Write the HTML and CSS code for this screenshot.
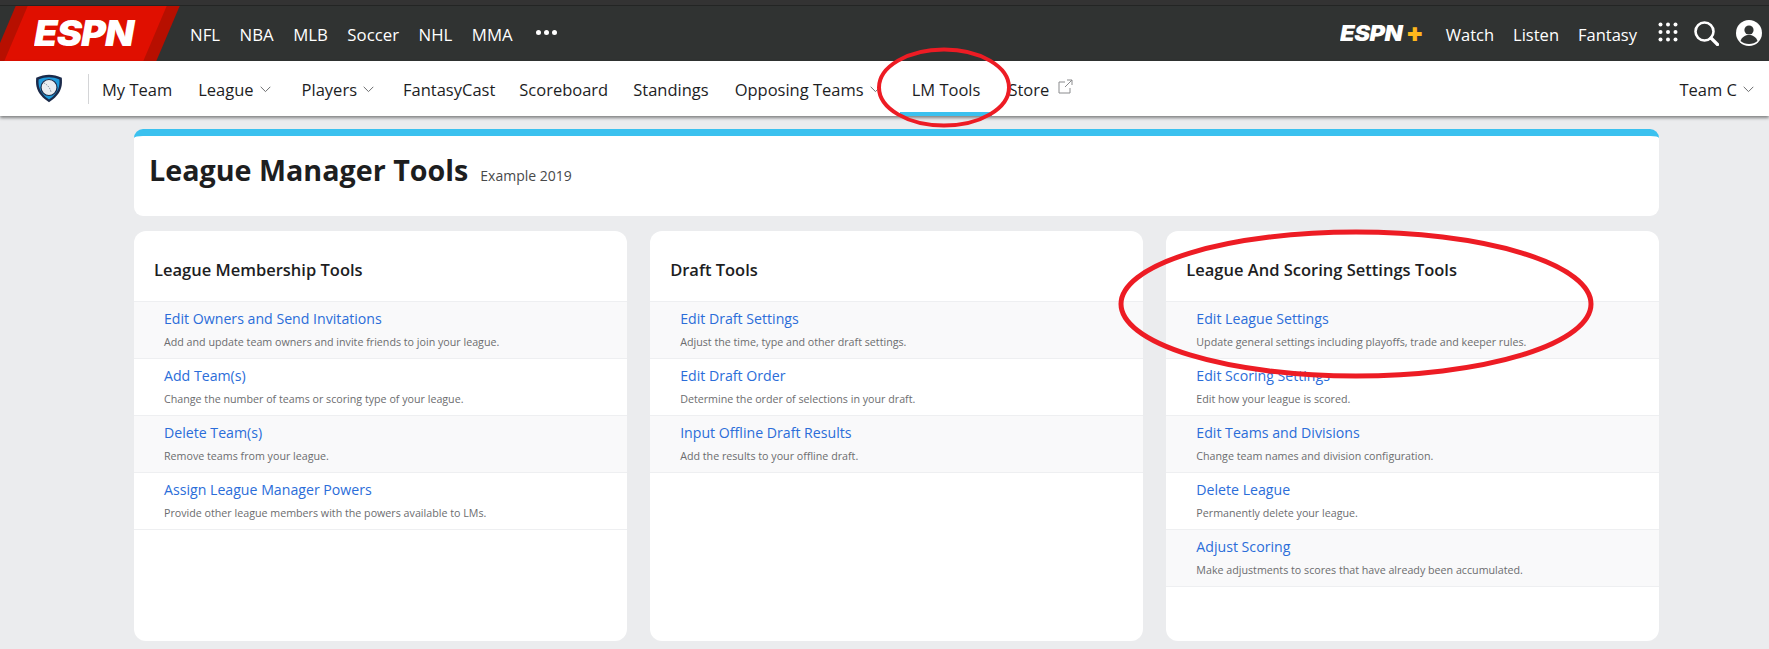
FILE: index.html
```html
<!DOCTYPE html>
<html lang="en">
<head>
<meta charset="utf-8">
<title>League Manager Tools</title>
<link rel="stylesheet" href="styles.css">
</head>
<body>
<header class="topbar">
  <a class="espn-logo"><span class="espn-word">ESPN</span></a>
  <nav class="sports">
    <a>NFL</a><a>NBA</a><a>MLB</a><a>Soccer</a><a>NHL</a><a>MMA</a>
    <span class="dots"><i></i><i></i><i></i></span>
  </nav>
  <div class="top-right">
    <a class="plus"><span class="plus-word">ESPN</span><span class="plus-sign">+</span></a>
    <a class="tr-link">Watch</a><a class="tr-link">Listen</a><a class="tr-link">Fantasy</a>
    <svg class="grid-ic" width="20" height="20" viewBox="0 0 20 20"><g fill="#fff"><circle cx="2.500" cy="2.500" r="2"/><circle cx="10" cy="2.500" r="2"/><circle cx="17.500" cy="2.500" r="2"/><circle cx="2.500" cy="10" r="2"/><circle cx="10" cy="10" r="2"/><circle cx="17.500" cy="10" r="2"/><circle cx="2.500" cy="17.500" r="2"/><circle cx="10" cy="17.500" r="2"/><circle cx="17.500" cy="17.500" r="2"/></g></svg>
    <svg class="search-ic" width="26" height="26" viewBox="0 0 26 26"><circle cx="11.500" cy="11.500" r="9" fill="none" stroke="#fff" stroke-width="2.600"/><path d="M18 18l6.500 6.500" stroke="#fff" stroke-width="3.200" stroke-linecap="round"/></svg>
    <svg class="user-ic" width="26" height="26" viewBox="0 0 26 26"><circle cx="13" cy="13" r="13" fill="#fff"/><circle cx="13" cy="10" r="4.600" fill="#303332"/><path d="M4.500 21c1.500-4.200 5-6 8.500-6s7 1.800 8.500 6c-2.200 2-5.200 3-8.500 3s-6.300-1-8.500-3z" fill="#303332"/></svg>
  </div>
</header>
<nav class="subnav">
  <svg class="shield" width="28" height="29" viewBox="0 0 28 29"><path d="M14 .8c4 0 8.500 1 12.800 3 .6 7.500.3 16-12.800 24.400C.9 19.800.6 11.300 1.200 3.800 5.500 1.800 10 .8 14 .8z" fill="#1b2a4a"/><path d="M14 3.300c3.400 0 7 .8 10.400 2.300.4 6.300-.2 13-10.400 20C3.800 18.600 3.200 11.900 3.600 5.600 7 4.100 10.600 3.300 14 3.300z" fill="#1e9bdc"/><circle cx="14" cy="13.500" r="8" fill="#e8edf1" stroke="#1b2a4a" stroke-width="1.200"/><path d="M9 9c3 1.500 6 4.500 7 9" fill="none" stroke="#8b97a5" stroke-width="1" stroke-dasharray="1.500 1"/></svg>
  <span class="divider"></span>
  <a class="sn my">My Team</a>
  <a class="sn league">League<svg class="chev" width="11" height="7" viewBox="0 0 11 7"><path d="M.7.8l4.800 4.800L10.300.8" fill="none" stroke="#6c6d6f" stroke-width="1"/></svg></a>
  <a class="sn players">Players<svg class="chev" width="11" height="7" viewBox="0 0 11 7"><path d="M.7.8l4.800 4.800L10.300.8" fill="none" stroke="#6c6d6f" stroke-width="1"/></svg></a>
  <a class="sn cast">FantasyCast</a>
  <a class="sn score">Scoreboard</a>
  <a class="sn stand">Standings</a>
  <a class="sn opp">Opposing Teams<svg class="chev" width="11" height="7" viewBox="0 0 11 7"><path d="M.7.8l4.800 4.800L10.300.8" fill="none" stroke="#6c6d6f" stroke-width="1"/></svg></a>
  <a class="sn lm active">LM Tools</a>
  <a class="sn store">Store<svg class="ext" width="15" height="15" viewBox="0 0 15 15"><path d="M12 9v5H1V3h6M9 1h5v5M14 1L7 8" fill="none" stroke="#8a8b8d" stroke-width="1"/></svg></a>
  <a class="sn team">Team C<svg class="chev" width="11" height="7" viewBox="0 0 11 7"><path d="M.7.8l4.800 4.800L10.300.8" fill="none" stroke="#6c6d6f" stroke-width="1"/></svg></a>
</nav>
<main class="content">
  <section class="page-head">
    <h1>League Manager Tools</h1>
    <span class="league-name">Example 2019</span>
  </section>
  <div class="tools">
    <section class="card">
      <h2>League Membership Tools</h2>
      <ul>
        <li><a>Edit Owners and Send Invitations</a><p>Add and update team owners and invite friends to join your league.</p></li>
        <li><a>Add Team(s)</a><p>Change the number of teams or scoring type of your league.</p></li>
        <li><a>Delete Team(s)</a><p>Remove teams from your league.</p></li>
        <li><a>Assign League Manager Powers</a><p>Provide other league members with the powers available to LMs.</p></li>
      </ul>
    </section>
    <section class="card">
      <h2>Draft Tools</h2>
      <ul>
        <li><a>Edit Draft Settings</a><p>Adjust the time, type and other draft settings.</p></li>
        <li><a>Edit Draft Order</a><p>Determine the order of selections in your draft.</p></li>
        <li><a>Input Offline Draft Results</a><p>Add the results to your offline draft.</p></li>
      </ul>
    </section>
    <section class="card">
      <h2>League And Scoring Settings Tools</h2>
      <ul>
        <li><a>Edit League Settings</a><p>Update general settings including playoffs, trade and keeper rules.</p></li>
        <li><a>Edit Scoring Settings</a><p>Edit how your league is scored.</p></li>
        <li><a>Edit Teams and Divisions</a><p>Change team names and division configuration.</p></li>
        <li><a>Delete League</a><p>Permanently delete your league.</p></li>
        <li><a>Adjust Scoring</a><p>Make adjustments to scores that have already been accumulated.</p></li>
      </ul>
    </section>
  </div>
</main>
<svg class="annot" width="1769" height="649" viewBox="0 0 1769 649">
  <ellipse cx="944" cy="87.500" rx="65" ry="38" fill="none" stroke="#ed1c24" stroke-width="4"/>
  <ellipse cx="1356" cy="304" rx="235" ry="72" fill="none" stroke="#ed1c24" stroke-width="5"/>
</svg>
</body>
</html>
```
FILE: styles.css
```css
* { box-sizing: border-box; }
html, body { margin: 0; padding: 0; }
body {
  position: relative;
  width: 1769px;
  height: 649px;
  overflow: hidden;
  background: #ebecee;
  font-family: "Open Sans", "Noto Sans", sans-serif;
  color: #1d1e1f;
}
a { text-decoration: none; color: inherit; }

.topbar {
  height: 61px;
  background: #303332;
  border-top: 5px solid #333;
  box-shadow: inset 0 1px 0 #232524;
  display: flex;
  align-items: center;
  color: #fff;
  font-size: 16.500px;
}
.espn-logo {
  position: relative;
  flex: none;
  width: 190px;
  height: 56px;
  align-self: flex-end;
  overflow: hidden;
  display: flex;
  align-items: center;
}
.espn-logo::before {
  content: "";
  position: absolute;
  left: 4px; top: 1px; bottom: 0;
  width: 164px;
  background: #b70f00;
  transform: skewX(-23deg);
}
.espn-logo::after {
  content: "";
  position: absolute;
  left: 16px; top: 1px; bottom: 0;
  width: 139px;
  background: #e00f00;
  transform: skewX(-23deg);
}
.espn-word {
  position: relative;
  z-index: 1;
  margin-left: 34px;
  font-family: Inter, "Liberation Sans", sans-serif;
  font-weight: 900;
  font-style: italic;
  font-size: 35px;
  line-height: 1;
  letter-spacing: -1px;
  transform: scaleX(1.090);
  transform-origin: left center;
}
.sports { display: flex; align-items: center; gap: 19.500px; font-size: 16.800px; padding-top: 2px; }
.dots { display: flex; gap: 3px; margin-left: 4px; margin-top: -4px; }
.dots i { width: 5px; height: 5px; border-radius: 50%; background: #fff; }
.top-right { margin-left: auto; display: flex; align-items: center; }
.plus {
  display: flex;
  align-items: center;
  margin-right: 22px;
  font-family: Inter, "Liberation Sans", sans-serif;
  font-style: italic;
  font-weight: 900;
  font-size: 22px;
  line-height: 1;
  width: 84px;
}
.plus-word { display: inline-block; transform: scaleX(1.080); transform-origin: left center; letter-spacing: -.5px; }
.plus-sign { margin-left: auto; color: #ffb81c; font-size: 26px; font-style: normal; }
.tr-link { margin-right: 19px; padding-top: 3px; }
.tr-link:last-of-type { margin-right: 21px; }
.grid-ic { margin-right: 15px; margin-top: -2px; }
.search-ic { margin-right: 17px; }
.user-ic { margin-right: 7px; }

.subnav {
  height: 55px;
  background: #fff;
  box-shadow: 0 2px 3px rgba(0,0,0,.45);
  display: flex;
  align-items: center;
  font-size: 16.500px;
  position: relative;
}
.shield { margin-left: 35px; flex: none; }
.divider { width: 1px; height: 30px; background: #d4d5d7; margin-left: 25px; }
.sn { position: relative; display: flex; align-items: center; height: 55px; padding-top: 1px; white-space: nowrap; }
.my { margin-left: 13px; }
.league { margin-left: 26px; }
.players { margin-left: 31px; }
.cast { margin-left: 29px; }
.score { margin-left: 24px; }
.stand { margin-left: 25px; }
.opp { margin-left: 26px; }
.lm { margin-left: 31px; }
.store { margin-left: 28px; }
.team { margin-left: auto; margin-right: 15px; }
.chev { margin-left: 6px; margin-top: 0; }
.ext { margin-left: 9px; margin-top: -5px; }
.active::after {
  content: "";
  position: absolute;
  left: -12px; right: -12px; bottom: 0;
  height: 4px;
  background: #3bc1ef;
}

.content { margin-left: 134px; width: 1525px; padding-top: 13px; }
.page-head {
  height: 87px;
  background: #fff;
  border-top: 7px solid #3bc1ef;
  border-radius: 9px;
  display: flex;
  align-items: baseline;
  padding: 13px 15px 0;
}
h1 { margin: 0; font-size: 28.700px; font-weight: 700; line-height: 42px; }
.league-name { margin-left: 12px; font-size: 14px; color: #48494a; }
.tools {
  display: grid;
  grid-template-columns: repeat(3, 1fr);
  gap: 23.500px;
  margin-top: 15px;
}
.card {
  height: 410px;
  background: #fff;
  border-radius: 12px;
  overflow: hidden;
}
h2 {
  margin: 0;
  height: 70px;
  padding: 27px 0 0 20px;
  font-size: 16.500px;
  font-weight: 600;
  line-height: 24px;
}
ul { margin: 0; padding: 0; list-style: none; border-top: 1px solid #eeeff1; }
li {
  height: 57px;
  padding: 7px 0 0 30px;
  border-bottom: 1px solid #eeeff1;
}
li:nth-child(odd) { background: #f9f9fa; }
li a { display: block; font-size: 14.150px; line-height: 20px; color: #2b6dd9; }
li p { margin: 5px 0 0; font-size: 10.700px; line-height: 16px; color: #6c6d6f; }

.annot { position: absolute; left: 0; top: 0; pointer-events: none; }
```
